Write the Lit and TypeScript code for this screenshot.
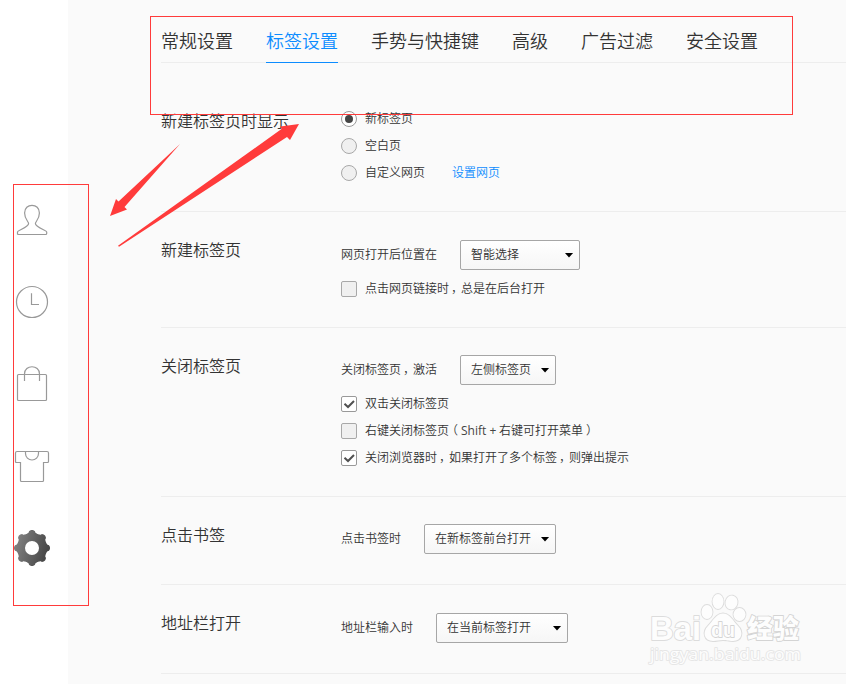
import { LitElement, html, css, svg } from "lit";
import { customElement, property } from "lit/decorators.js";

const gearPath = (cx: number, cy: number): string => {
  const pts: string[] = [];
  for (let i = 0; i <= 240; i++) {
    const a = (i / 240) * Math.PI * 2;
    const w = Math.cos(a * 8);
    const r = w > 0 ? 16 + 2 * Math.pow(w, 0.45) : 16 - 0.9 * Math.pow(-w, 0.7);
    pts.push(`${(cx + r * Math.cos(a)).toFixed(2)} ${(cy + r * Math.sin(a)).toFixed(2)}`);
  }
  return `M${pts.join("L")}Z M${cx - 7} ${cy}a7 7 0 1 0 14 0a7 7 0 1 0 -14 0Z`;
};

const icons = [
  svg`<path d="M3.5 34.5 V32 C3.5 30.6 14.6 27 14.6 23.4 C14.6 21.6 10.6 19.5 10.6 13 C10.6 8 14 5.3 18 5.3 S25.4 8 25.4 13 C25.4 19.5 21.4 21.6 21.4 23.4 C21.4 27 32.7 30.6 32.7 32 V33.5 Q32.7 34.5 31.7 34.5 H4.5 Q3.5 34.5 3.5 33.5Z"/>`,
  svg`<circle cx="18" cy="20" r="15.5"/><path d="M17.5 11.2V22.5H25"/>`,
  svg`<rect x="3.5" y="10.5" width="29" height="26" rx="1"/><path d="M10.5 17V10C10.5 0.3 25.5 0.3 25.5 10V17"/>`,
  svg`<path d="M3 5.5H33Q34.5 5.5 34.5 7V15.5Q34.5 16.5 33.5 16.5H29.5V34.5Q29.5 35.5 28.5 35.5H7.5Q6.5 35.5 6.5 34.5V16.5H2.5Q1.5 16.5 1.5 15.5V7Q1.5 5.5 3 5.5Z"/><path d="M11.5 5.5V7.5A6.5 6.5 0 0 0 24.5 7.5V5.5"/>`,
  svg`<defs><linearGradient id="g" x1="0" y1="0" x2="1" y2="0.3"><stop offset="0" stop-color="#898989"/><stop offset="1" stop-color="#484848"/></linearGradient></defs><path d=${gearPath(18, 20)} fill="url(#g)" fill-rule="evenodd" stroke="none"/>`,
];

const tabs = ["常规设置", "标签设置", "手势与快捷键", "高级", "广告过滤", "安全设置"];

@customElement("setting-choice")
class SettingChoice extends LitElement {
  @property() type = "checkbox";
  @property({ type: Boolean }) checked = false;

  static styles = css`
    :host { display: flex; align-items: center; height: 16px; margin-bottom: 11px; white-space: nowrap; }
    .mark { box-sizing: border-box; width: 16px; height: 16px; margin-right: 8px; flex: none;
      border: 1px solid #a8a8a8; border-radius: 2px; background: #f0f0f0;
      display: flex; align-items: center; justify-content: center; }
    .radio { border-radius: 50%; }
    .on { background: #fff; border-color: #999; }
    .dot { width: 8px; height: 8px; border-radius: 50%; background: #444; }
    svg { display: block; width: 14px; height: 14px; fill: none; stroke: #505050; stroke-width: 2; }
  `;

  render() {
    const radio = this.type === "radio";
    const inner = radio
      ? html`<span class="dot"></span>`
      : html`<svg viewBox="0 0 14 14"><path d="M2.5 6.8L6 10L12 4"/></svg>`;
    return html`<span class="mark ${radio ? "radio" : ""} ${this.checked ? "on" : ""}">${this.checked ? inner : ""}</span><slot></slot>`;
  }
}

@customElement("setting-select")
class SettingSelect extends LitElement {
  @property() value = "";

  static styles = css`
    :host { box-sizing: border-box; display: flex; align-items: center; justify-content: space-between;
      height: 30px; padding: 0 5px 0 10px; border: 1px solid #a6a6a6; border-radius: 2px;
      background: linear-gradient(#fff, #f6f6f6); white-space: nowrap; }
    .arrow { width: 9px; height: 5px; margin-right: 0.5px; background: #000; clip-path: polygon(0 0, 100% 0, 50% 100%); }
  `;

  render() {
    return html`<span>${this.value}</span><span class="arrow"></span>`;
  }
}

@customElement("app-root")
class AppRoot extends LitElement {
  static styles = css`
    :host { display: flex; position: relative; width: 846px; height: 684px; overflow: hidden;
      background: #fafafa; color: #333; font: 12px/16px "Open Sans", "Noto Sans CJK SC", sans-serif; font-weight: 350; }
    .side { width: 68px; flex: none; background: #fff; box-sizing: border-box; padding: 200px 0 0 14px;
      display: flex; flex-direction: column; gap: 42px; }
    .side svg { width: 36px; height: 40px; display: block; fill: none; stroke: #999; stroke-width: 1.2; }
    main { flex: 1; margin-left: 93px; min-width: 0; }
    nav { display: flex; gap: 33px; height: 62px; border-bottom: 1px solid #ededed; }
    .tab { height: 62px; box-sizing: border-box; padding-top: 27px; font-size: 18px; line-height: 28px; white-space: nowrap; }
    .current { height: 63px; color: #0c8cff; border-bottom: 1px solid #0c8cff; }
    section { display: flex; box-sizing: border-box; border-bottom: 1px solid #ededed; }
    h2 { margin: 0; width: 180px; flex: none; font-size: 16px; line-height: 24px; font-weight: inherit; white-space: nowrap; padding-top: 26px; }
    .s1 { height: 149px; } .s1 h2 { padding-top: 46px; } .s1 .body { padding-top: 48px; }
    .s2 { height: 116px; } .s3 { height: 169px; } .s4 { height: 88px; } .s5 { height: 89px; }
    .body { padding-top: 28px; }
    .s3 .body, .s4 .body { padding-top: 27px; }
    .row { display: flex; align-items: center; gap: 23px; height: 30px; margin-bottom: 11px; white-space: nowrap; }
    .w120 { width: 120px; } .w96 { width: 96px; } .w132 { width: 132px; }
    .link { color: #0c8cff; margin-left: 27px; }
    .comma { padding-left: 2px; letter-spacing: -2px; }
    .paren { display: inline-block; width: 12px; text-indent: -3px; }
    .close { text-indent: 3px; }
    .latin { display: inline-block; width: 38px; font-weight: 400; color: #444; }
    .overlay { position: absolute; inset: 0; width: 846px; height: 684px; }
    .frame { fill: none; stroke: #ff3b3b; }
    .arrows { fill: #ff3b3b; }
    .mark { fill: #fdfdfd; stroke: #dcdcdc; stroke-width: 1.8; paint-order: stroke; stroke-linejoin: round; }
    .brand { font: bold 33px "Liberation Sans", sans-serif; }
    .du { font: bold 21px "Liberation Sans", sans-serif; stroke: #d4d4d4; }
    .cn { font: 900 26px "Noto Sans CJK SC", sans-serif; stroke: #d4d4d4; }
    .url { font: 17px "Open Sans", sans-serif; stroke: #e6e6e6; }
  `;

  render() {
    const comma = html`<span class="comma">，</span>`;
    return html`
      <aside class="side">${icons.map((i) => html`<svg viewBox="0 0 36 40">${i}</svg>`)}</aside>
      <main>
        <nav>${tabs.map((t, i) => html`<span class="tab ${i === 1 ? "current" : ""}">${t}</span>`)}</nav>
        <section class="s1">
          <h2>新建标签页时显示</h2>
          <div class="body">
            <setting-choice type="radio" checked>新标签页</setting-choice>
            <setting-choice type="radio">空白页</setting-choice>
            <setting-choice type="radio">自定义网页<span class="link">设置网页</span></setting-choice>
          </div>
        </section>
        <section class="s2">
          <h2>新建标签页</h2>
          <div class="body">
            <div class="row"><span>网页打开后位置在</span><setting-select class="w120" value="智能选择"></setting-select></div>
            <setting-choice><span>点击网页链接时${comma}总是在后台打开</span></setting-choice>
          </div>
        </section>
        <section class="s3">
          <h2>关闭标签页</h2>
          <div class="body">
            <div class="row"><span>关闭标签页${comma}激活</span><setting-select class="w96" value="左侧标签页"></setting-select></div>
            <setting-choice checked>双击关闭标签页</setting-choice>
            <setting-choice><span>右键关闭标签页<span class="paren">（</span><span class="latin">Shift +</span>右键可打开菜单<span class="paren close">）</span></span></setting-choice>
            <setting-choice checked><span>关闭浏览器时${comma}如果打开了多个标签${comma}则弹出提示</span></setting-choice>
          </div>
        </section>
        <section class="s4">
          <h2>点击书签</h2>
          <div class="body"><div class="row"><span>点击书签时</span><setting-select class="w132" value="在新标签前台打开"></setting-select></div></div>
        </section>
        <section class="s5">
          <h2>地址栏打开</h2>
          <div class="body"><div class="row"><span>地址栏输入时</span><setting-select class="w132" value="在当前标签打开"></setting-select></div></div>
        </section>
      </main>
      <svg class="overlay" viewBox="0 0 846 684">
        <g class="mark">
          <ellipse cx="707" cy="612" rx="5.5" ry="7"/>
          <ellipse cx="718" cy="601.5" rx="5.5" ry="7.5"/>
          <ellipse cx="731.5" cy="602.5" rx="6" ry="7" transform="rotate(12 731.5 602.5)"/>
          <ellipse cx="739.5" cy="614.5" rx="6" ry="6.5"/>
          <path d="M723 613.5C730 613.5 733 621 738 626C744 632 742 641 733 641C728 641 727 640 723 640S717 641 713 641C704 641 702 632 708 626C713 621 716 613.5 723 613.5Z"/>
          <text class="brand" x="650" y="640" textLength="51" lengthAdjust="spacingAndGlyphs">Bai</text>
          <text class="du" x="711" y="636.5" textLength="24" lengthAdjust="spacingAndGlyphs">du</text>
          <text class="cn" x="747" y="638" textLength="52" lengthAdjust="spacingAndGlyphs">经验</text>
          <text class="url" x="650" y="660" textLength="151" lengthAdjust="spacingAndGlyphs">jingyan.baidu.com</text>
        </g>
        <g class="frame">
          <rect x="150.5" y="16.5" width="642" height="98"/>
          <rect x="13.5" y="184.5" width="75" height="421"/>
        </g>
        <g class="arrows">
          <path d="M180 144L124.5 207L127 209.5L110 216L116 199L118.5 201.5Z"/>
          <path d="M118 245.8L281.5 129L280.5 126.5L299 124L290 140L287 137L119 246.8Z"/>
        </g>
      </svg>
    `;
  }
}
